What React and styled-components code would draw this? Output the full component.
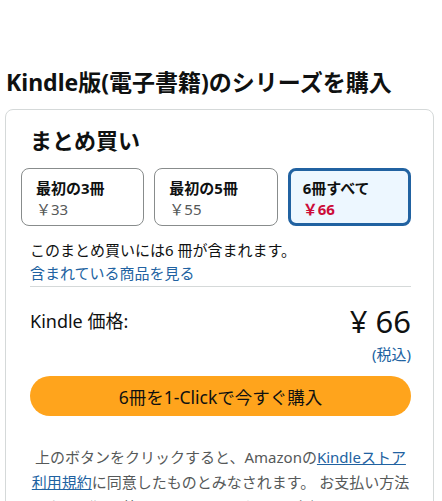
import React from "react";
import styled, { createGlobalStyle } from "styled-components";

const Global = createGlobalStyle`
  html, body { margin: 0; padding: 0; background: #fff; }
  body {
    font-family: "Noto Sans", "Noto Sans CJK JP", sans-serif;
    color: #0f1111;
    overflow: hidden;
  }
`;

const Page = styled.div`
  padding: 64px 8px 0 5px;
`;

const Title = styled.h1`
  margin: 0 0 9px 1px;
  font-size: 23px;
  line-height: 36px;
  font-weight: 700;
`;

const Card = styled.section`
  border: 1px solid #d5d9d9;
  border-radius: 8px;
  padding: 13px 22px 30px 24px;
`;

const CardTitle = styled.h2`
  margin: 0 0 11px;
  font-size: 22px;
  line-height: 34px;
  font-weight: 700;
`;

const Options = styled.div`
  display: grid;
  grid-template-columns: repeat(3, 1fr);
  gap: 10px;
  margin-left: -9px;
`;

const Option = styled.button`
  box-sizing: border-box;
  height: 58px;
  text-align: left;
  font-family: inherit;
  padding: ${(p) => (p.$selected ? "7px 12px" : "9px 14px")};
  border: ${(p) => (p.$selected ? "3px solid #2162a1" : "1px solid #888c8c")};
  border-radius: 8px;
  background: ${(p) => (p.$selected ? "#edf7ff" : "#fff")};
  display: flex;
  flex-direction: column;
  gap: 1px;
`;

const OptionName = styled.span`
  font-size: 15px;
  line-height: 20px;
  font-weight: 700;
  color: #0f1111;
`;

const OptionPrice = styled.span`
  font-size: 15px;
  line-height: 20px;
  font-weight: ${(p) => (p.$selected ? 700 : 400)};
  color: ${(p) => (p.$selected ? "#cc0c39" : "#565959")};
`;

const Info = styled.p`
  margin: 13px 0 0;
  font-size: 15px;
  line-height: 22px;
`;

const Link = styled.a`
  display: block;
  font-size: 15px;
  line-height: 24px;
  color: #2162a1;
  text-decoration: none;
`;

const Divider = styled.hr`
  margin: 1px 0 0;
  border: 0;
  border-top: 1px solid #d5d9d9;
`;

const PriceRow = styled.div`
  display: flex;
  justify-content: space-between;
  align-items: flex-start;
  margin-top: 16px;
`;

const PriceLabel = styled.span`
  font-size: 18px;
  line-height: 36px;
`;

const PriceBlock = styled.div`
  display: flex;
  flex-direction: column;
  align-items: flex-end;
`;

const BigPrice = styled.span`
  font-size: 31px;
  line-height: 36px;
`;

const Tax = styled.span`
  font-size: 15px;
  line-height: 30px;
  color: #2162a1;
`;

const BuyButton = styled.button`
  display: block;
  width: 100%;
  height: 40px;
  margin-top: 7px;
  border: 0;
  border-radius: 20px;
  background: #ffa41c;
  font-family: inherit;
  font-size: 17.5px;
  color: #0f1111;
`;

const Notice = styled.p`
  margin: 29px 0 0;
  font-size: 15px;
  line-height: 25px;
  color: #565959;
  text-align: center;
  a {
    color: #2162a1;
    text-decoration: underline;
  }
`;

const options = [
  { name: "最初の3冊", price: "￥33" },
  { name: "最初の5冊", price: "￥55" },
  { name: "6冊すべて", price: "￥66", selected: true },
];

export default function App() {
  return (
    <>
      <Global />
      <Page>
        <Title>Kindle版(電子書籍)のシリーズを購入</Title>
        <Card>
          <CardTitle>まとめ買い</CardTitle>
          <Options>
            {options.map((o) => (
              <Option key={o.name} $selected={o.selected}>
                <OptionName>{o.name}</OptionName>
                <OptionPrice $selected={o.selected}>{o.price}</OptionPrice>
              </Option>
            ))}
          </Options>
          <Info>このまとめ買いには6 冊が含まれます。</Info>
          <Link href="#">含まれている商品を見る</Link>
          <Divider />
          <PriceRow>
            <PriceLabel>Kindle 価格:</PriceLabel>
            <PriceBlock>
              <BigPrice>¥ 66</BigPrice>
              <Tax>(税込)</Tax>
            </PriceBlock>
          </PriceRow>
          <BuyButton>6冊を1-Clickで今すぐ購入</BuyButton>
          <Notice>
            上のボタンをクリックすると、Amazonの<a href="#">Kindleストア利用規約</a>に同意したものとみなされます。 お支払い方法および返品等については、こちらをご覧ください。
          </Notice>
        </Card>
      </Page>
    </>
  );
}
